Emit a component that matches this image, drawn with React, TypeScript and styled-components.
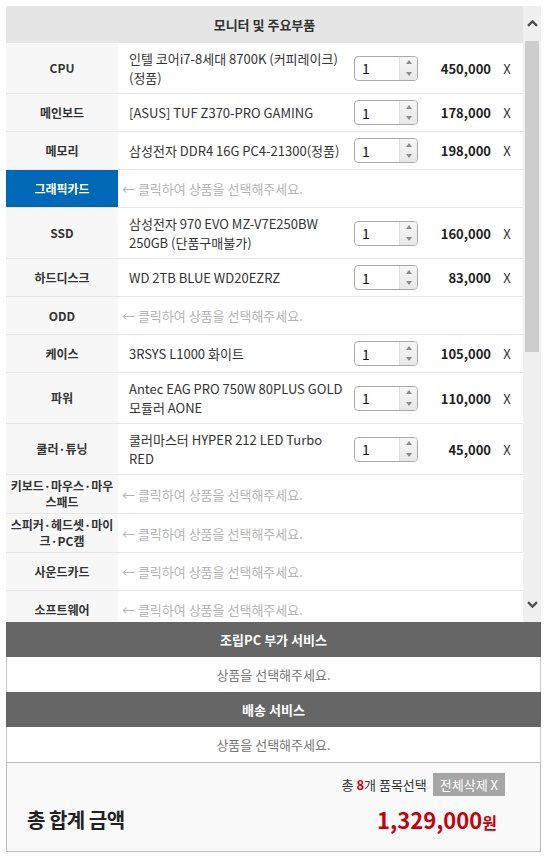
import styled, { createGlobalStyle } from "styled-components";

const GlobalStyle = createGlobalStyle`
  body {
    margin: 0;
    background: #fff;
    font-family: "Noto Sans CJK KR", "Noto Sans", sans-serif;
    color: #333;
  }
`;

const Wrapper = styled.div`
  padding: 6px;
  width: 535px;
`;

const ScrollBox = styled.div`
  display: flex;
  height: 616px;
`;

const List = styled.div`
  flex: 1;
  overflow: hidden;
`;

const SectionHead = styled.div`
  height: 37px;
  display: flex;
  align-items: center;
  justify-content: center;
  background: #e5e5e5;
  font-size: 13px;
  font-weight: 700;
  color: #333;
`;

const Row = styled.div`
  display: grid;
  grid-template-columns: 112px 1fr 64px 73px 32px;
  min-height: 37px;
  border-bottom: 1px solid #e6e6e6;
`;

const Label = styled.div<{ $active?: boolean }>`
  display: flex;
  align-items: center;
  justify-content: center;
  text-align: center;
  padding: 3px 4px;
  background: ${(p) => (p.$active ? "#0068b7" : "#f7f7f7")};
  color: ${(p) => (p.$active ? "#fff" : "#333")};
  font-size: 12px;
  font-weight: 700;
  line-height: 16px;
`;

const Product = styled.div`
  display: flex;
  align-items: center;
  padding: 6px 8px 6px 11px;
  font-size: 13px;
  line-height: 19px;
  color: #333;
`;

const Placeholder = styled.div`
  grid-column: span 4;
  display: flex;
  align-items: center;
  padding-left: 4px;
  font-size: 13px;
  color: #b4b4b4;
`;

const Cell = styled.div<{ $align?: string }>`
  display: flex;
  align-items: center;
  justify-content: ${(p) => p.$align || "center"};
  font-size: 13px;
  color: #333;
`;

const Price = styled(Cell)`
  font-weight: 700;
  color: #222;
`;

const Spinner = styled.div`
  display: flex;
  width: 64px;
  height: 25px;
  box-sizing: border-box;
  border: 1px solid #a9a9a9;
  border-radius: 4px;
  overflow: hidden;
  background: #fff;
`;

const SpinValue = styled.div`
  flex: 1;
  display: flex;
  align-items: center;
  padding-left: 7px;
  font-size: 14px;
  color: #111;
`;

const SpinButtons = styled.div`
  width: 17px;
  display: flex;
  flex-direction: column;
  border-left: 1px solid #dcdcdc;
  background: linear-gradient(#f6f6f6, #e8e8e8);
`;

const SpinHalf = styled.div<{ $down?: boolean }>`
  flex: 1;
  display: flex;
  align-items: center;
  justify-content: center;
  &::after {
    content: "";
    border-left: 3px solid transparent;
    border-right: 3px solid transparent;
    ${(p) =>
      p.$down ? "border-top: 4px solid #8a8a8a;" : "border-bottom: 4px solid #8a8a8a;"}
  }
`;

const Scrollbar = styled.div`
  width: 18px;
  display: flex;
  flex-direction: column;
  background: #f0f0f0;
`;

const ScrollButton = styled.div`
  height: 35px;
  display: flex;
  align-items: center;
  justify-content: center;
`;

const Thumb = styled.div`
  height: 311px;
  margin: 0 2px;
  background: #cdcdcd;
`;

const Track = styled.div`
  flex: 1;
`;

const ServiceBar = styled.div`
  height: 35px;
  display: flex;
  align-items: center;
  justify-content: center;
  background: #666;
  color: #fff;
  font-size: 13px;
  font-weight: 700;
`;

const ServiceEmpty = styled.div`
  height: 35px;
  display: flex;
  align-items: center;
  justify-content: center;
  border-left: 1px solid #c8c8c8;
  border-right: 1px solid #c8c8c8;
  background: #fff;
  color: #777;
  font-size: 13px;
`;

const Summary = styled.div`
  height: 90px;
  box-sizing: border-box;
  border: 1px solid #bbb;
  background: #f9f9f9;
  padding: 10px 35px 0 20px;
`;

const SelectRow = styled.div`
  display: flex;
  justify-content: flex-end;
  align-items: center;
  gap: 6px;
  font-size: 13px;
  color: #333;
`;

const Count = styled.b`
  color: #d0000c;
`;

const ClearButton = styled.button`
  height: 23px;
  padding: 0 7px;
  border: none;
  background: #a6a6a6;
  color: #fff;
  font-family: inherit;
  font-size: 13px;
`;

const TotalRow = styled.div`
  display: flex;
  justify-content: space-between;
  align-items: center;
  margin-top: 7px;
  padding-right: 8px;
`;

const TotalLabel = styled.div`
  font-size: 20px;
  font-weight: 700;
  color: #222;
  letter-spacing: -0.5px;
`;

const TotalPrice = styled.div`
  font-size: 22px;
  font-weight: 700;
  color: #c8000a;
  small {
    font-size: 16px;
  }
`;

type Part = { label: string; name?: string; price?: string; active?: boolean };

const parts: Part[] = [
  { label: "CPU", name: "인텔 코어i7-8세대 8700K (커피레이크) (정품)", price: "450,000" },
  { label: "메인보드", name: "[ASUS] TUF Z370-PRO GAMING", price: "178,000" },
  { label: "메모리", name: "삼성전자 DDR4 16G PC4-21300(정품)", price: "198,000" },
  { label: "그래픽카드", active: true },
  { label: "SSD", name: "삼성전자 970 EVO MZ-V7E250BW 250GB (단품구매불가)", price: "160,000" },
  { label: "하드디스크", name: "WD 2TB BLUE WD20EZRZ", price: "83,000" },
  { label: "ODD" },
  { label: "케이스", name: "3RSYS L1000 화이트", price: "105,000" },
  { label: "파워", name: "Antec EAG PRO 750W 80PLUS GOLD 모듈러 AONE", price: "110,000" },
  { label: "쿨러·튜닝", name: "쿨러마스터 HYPER 212 LED Turbo RED", price: "45,000" },
  { label: "키보드·마우스·마우스패드" },
  { label: "스피커·헤드셋·마이크·PC캠" },
  { label: "사운드카드" },
  { label: "소프트웨어" },
];

function Chevron({ down }: { down?: boolean }) {
  return (
    <svg width="11" height="7" viewBox="0 0 11 7">
      <polyline
        points={down ? "1,1.2 5.5,5.6 10,1.2" : "1,5.8 5.5,1.4 10,5.8"}
        fill="none"
        stroke="#505050"
        strokeWidth="2.4"
      />
    </svg>
  );
}

function QtySpinner() {
  return (
    <Spinner>
      <SpinValue>1</SpinValue>
      <SpinButtons>
        <SpinHalf />
        <SpinHalf $down />
      </SpinButtons>
    </Spinner>
  );
}

export default function App() {
  return (
    <Wrapper>
      <GlobalStyle />
      <ScrollBox>
        <List>
          <SectionHead>모니터 및 주요부품</SectionHead>
          {parts.map((p) => (
            <Row key={p.label}>
              <Label $active={p.active}>{p.label}</Label>
              {p.name ? (
                <>
                  <Product>{p.name}</Product>
                  <Cell>
                    <QtySpinner />
                  </Cell>
                  <Price $align="flex-end">{p.price}</Price>
                  <Cell>X</Cell>
                </>
              ) : (
                <Placeholder>← 클릭하여 상품을 선택해주세요.</Placeholder>
              )}
            </Row>
          ))}
        </List>
        <Scrollbar>
          <ScrollButton>
            <Chevron />
          </ScrollButton>
          <Thumb />
          <Track />
          <ScrollButton>
            <Chevron down />
          </ScrollButton>
        </Scrollbar>
      </ScrollBox>
      <ServiceBar>조립PC 부가 서비스</ServiceBar>
      <ServiceEmpty>상품을 선택해주세요.</ServiceEmpty>
      <ServiceBar>배송 서비스</ServiceBar>
      <ServiceEmpty>상품을 선택해주세요.</ServiceEmpty>
      <Summary>
        <SelectRow>
          <span>
            총 <Count>8</Count>개 품목선택
          </span>
          <ClearButton>전체삭제 X</ClearButton>
        </SelectRow>
        <TotalRow>
          <TotalLabel>총 합계 금액</TotalLabel>
          <TotalPrice>
            1,329,000<small>원</small>
          </TotalPrice>
        </TotalRow>
      </Summary>
    </Wrapper>
  );
}
